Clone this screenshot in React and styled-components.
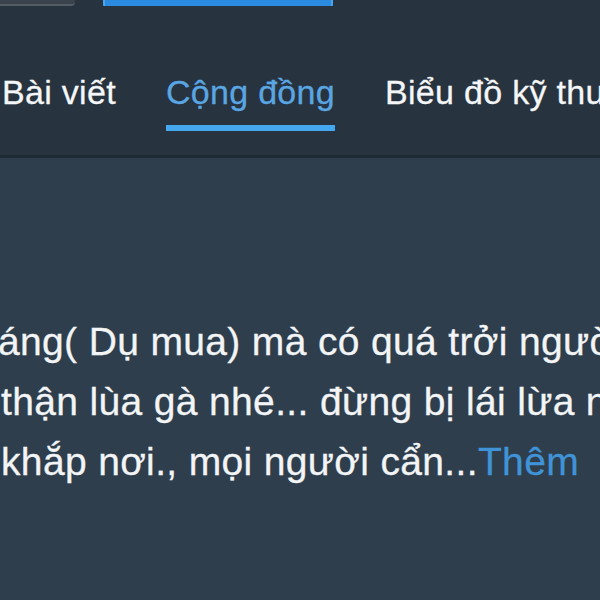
import React from "react";
import styled, { createGlobalStyle } from "styled-components";

const GlobalStyle = createGlobalStyle`
  html, body {
    margin: 0;
    padding: 0;
    background: #2e3e4c;
    overflow: hidden;
  }
  body {
    font-family: "Liberation Sans", Arial, sans-serif;
  }
`;

const Page = styled.div`
  width: 600px;
  height: 600px;
  display: flex;
  flex-direction: column;
  overflow: hidden;
`;

const Header = styled.header`
  height: 155px;
  flex-shrink: 0;
  background: #27333e;
  border-bottom: 3px solid #1e2a34;
  display: flex;
  flex-direction: column;
`;

const TopRow = styled.div`
  height: 6px;
  display: flex;
  align-items: flex-end;
  overflow: hidden;
`;

const SearchBox = styled.div`
  width: 75px;
  height: 40px;
  background: #3a434c;
  border-radius: 0 0 4px 0;
  border-bottom: 2px solid #545d66;
  align-self: flex-start;
  margin-top: -36px;
`;

const BlueButton = styled.div`
  width: 226px;
  height: 40px;
  margin-left: 28px;
  margin-top: -34px;
  align-self: flex-start;
  background: #2a8be0;
  border: 2px solid #48a6ef;
  border-radius: 6px;
`;

const TabBar = styled.nav`
  display: flex;
  gap: 50px;
  padding-left: 2px;
  margin-top: 66px;
  white-space: nowrap;
`;

const Tab = styled.div`
  display: flex;
  flex-direction: column;
  gap: 13px;
  font-size: 34px;
  line-height: 40px;
  color: ${(p) => (p.active ? "#5aa6e2" : "#f4f6f8")};
  -webkit-text-stroke: 0.3px currentColor;
  letter-spacing: 0.3px;
`;

const Underline = styled.div`
  height: 6px;
  background: ${(p) => (p.active ? "#45a7ee" : "transparent")};
`;

const Body = styled.main`
  flex: 1;
  background: #2e3e4c;
  padding-top: 154px;
`;

const Line = styled.div`
  font-size: 39px;
  line-height: 60px;
  letter-spacing: 0.35px;
  color: #f2f4f6;
  -webkit-text-stroke: 0.3px currentColor;
  white-space: nowrap;
  margin-left: ${(p) => p.shift || 0}px;
`;

const More = styled.span`
  color: #3f93d6;
`;

const tabs = ["Bài viết", "Cộng đồng", "Biểu đồ kỹ thuật"];

export default function App() {
  return (
    <Page>
      <GlobalStyle />
      <Header>
        <TopRow>
          <SearchBox />
          <BlueButton />
        </TopRow>
        <TabBar>
          {tabs.map((t) => (
            <Tab key={t} active={t === "Cộng đồng"}>
              {t}
              <Underline active={t === "Cộng đồng"} />
            </Tab>
          ))}
        </TabBar>
      </Header>
      <Body>
        <Line shift={-2}>áng( Dụ mua) mà có quá trởi người</Line>
        <Line shift={1}>thận lùa gà nhé... đừng bị lái lừa nhé</Line>
        <Line shift={1}>
          khắp nơi., mọi người cẩn...<More>Thêm</More>
        </Line>
      </Body>
    </Page>
  );
}
